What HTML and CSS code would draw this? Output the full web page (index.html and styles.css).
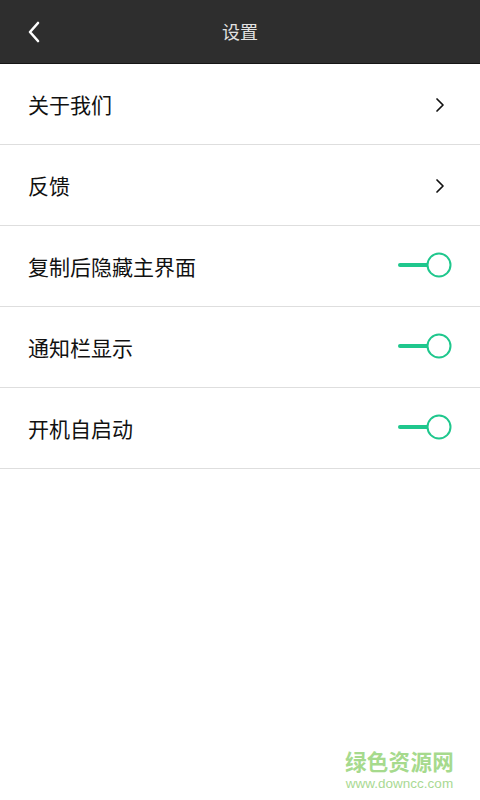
FILE: index.html
```html
<!DOCTYPE html>
<html lang="zh">
<head>
<meta charset="utf-8">
<link rel="stylesheet" href="styles.css">
</head>
<body>
<div class="app">
  <header class="topbar">
    <svg class="back" width="14" height="22" viewBox="0 0 14 22"><path d="M11 2 L3 11 L11 20" fill="none" stroke="#fff" stroke-width="2.6" stroke-linecap="round" stroke-linejoin="round"/></svg>
    <div class="title">设置</div>
  </header>
  <ul class="list">
    <li class="row"><span class="label">关于我们</span>
      <svg class="chev" width="12" height="16" viewBox="0 0 12 16"><path d="M3 2 L9 8 L3 14" fill="none" stroke="#111" stroke-width="1.7" stroke-linecap="round" stroke-linejoin="round"/></svg></li>
    <li class="row"><span class="label">反馈</span>
      <svg class="chev" width="12" height="16" viewBox="0 0 12 16"><path d="M3 2 L9 8 L3 14" fill="none" stroke="#111" stroke-width="1.7" stroke-linecap="round" stroke-linejoin="round"/></svg></li>
    <li class="row"><span class="label">复制后隐藏主界面</span>
      <svg class="toggle" width="56" height="28" viewBox="0 0 56 28"><line x1="3" y1="14" x2="31" y2="14" stroke="#1fc78d" stroke-width="4" stroke-linecap="round"/><circle cx="42" cy="14" r="11.5" fill="#fff" stroke="#1fc78d" stroke-width="2"/></svg></li>
    <li class="row"><span class="label">通知栏显示</span>
      <svg class="toggle" width="56" height="28" viewBox="0 0 56 28"><line x1="3" y1="14" x2="31" y2="14" stroke="#1fc78d" stroke-width="4" stroke-linecap="round"/><circle cx="42" cy="14" r="11.5" fill="#fff" stroke="#1fc78d" stroke-width="2"/></svg></li>
    <li class="row"><span class="label">开机自启动</span>
      <svg class="toggle" width="56" height="28" viewBox="0 0 56 28"><line x1="3" y1="14" x2="31" y2="14" stroke="#1fc78d" stroke-width="4" stroke-linecap="round"/><circle cx="42" cy="14" r="11.5" fill="#fff" stroke="#1fc78d" stroke-width="2"/></svg></li>
  </ul>
  <div class="watermark">
    <div class="wm-cn">绿色资源网</div>
    <div class="wm-url">www.downcc.com</div>
  </div>
</div>
</body>
</html>
```

FILE: styles.css
```css
html, body {
  margin: 0;
  padding: 0;
  background: #fff;
}
body {
  font-family: "Noto Sans CJK SC", "Noto Sans", sans-serif;
}
.app {
  width: 480px;
  height: 800px;
  display: flex;
  flex-direction: column;
  position: relative;
  overflow: hidden;
}
.topbar {
  height: 63px;
  background: #2e2e2e;
  border-bottom: 1px solid #161616;
  display: flex;
  align-items: center;
  justify-content: center;
  position: relative;
}
.back {
  position: absolute;
  left: 27px;
  top: 21px;
}
.title {
  color: #e2e2e2;
  font-size: 18px;
  line-height: 1;
  margin-top: -1px;
}
.list {
  list-style: none;
  margin: 0;
  padding: 0;
}
.row {
  height: 80px;
  border-bottom: 1px solid #dedede;
  display: flex;
  align-items: center;
  justify-content: space-between;
  padding: 0 25px 0 28px;
}
.label {
  font-size: 21px;
  color: #111;
  line-height: 1;
}
.chev {
  margin-right: 9px;
  margin-top: 1px;
}
.toggle {
  margin-right: 2px;
  margin-top: -2px;
}
.watermark {
  position: absolute;
  right: 26px;
  bottom: 9px;
  display: flex;
  flex-direction: column;
  align-items: center;
  gap: 4px;
}
.wm-cn {
  font-size: 21.5px;
  font-weight: bold;
  color: #a6da8d;
  letter-spacing: 0.3px;
  line-height: 22px;
}
.wm-url {
  font-family: "Liberation Sans", Arial, sans-serif;
  font-size: 13.5px;
  color: #a9d993;
  line-height: 15px;
}
```
